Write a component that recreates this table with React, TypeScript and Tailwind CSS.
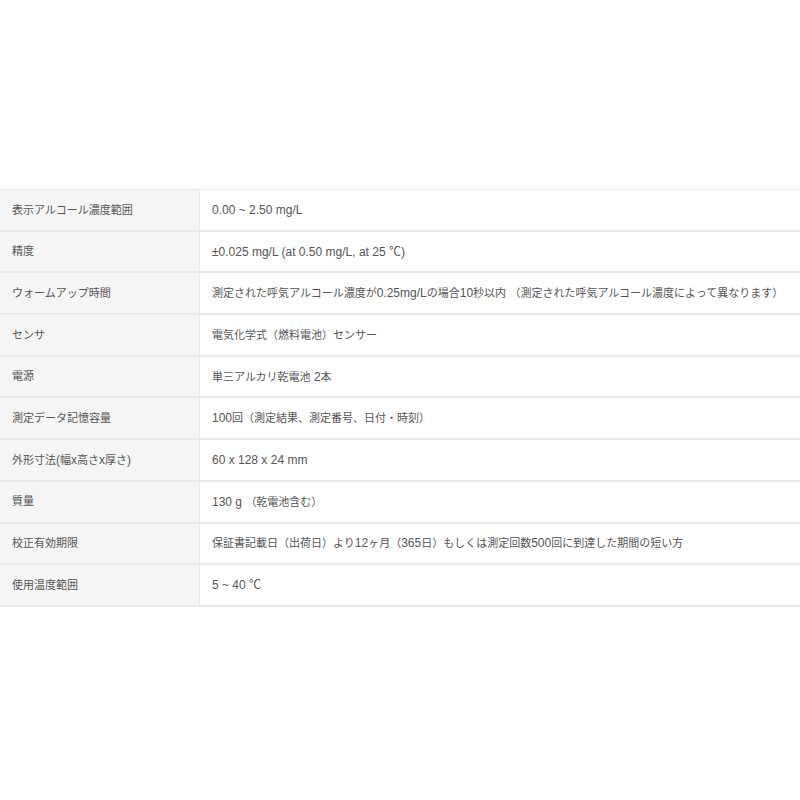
const specs: [string, string][] = [
  ["表示アルコール濃度範囲", "0.00 ~ 2.50 mg/L"],
  ["精度", "±0.025 mg/L (at 0.50 mg/L, at 25 ℃)"],
  [
    "ウォームアップ時間",
    "測定された呼気アルコール濃度が0.25mg/Lの場合10秒以内 （測定された呼気アルコール濃度によって異なります）",
  ],
  ["センサ", "電気化学式（燃料電池）センサー"],
  ["電源", "単三アルカリ乾電池 2本"],
  ["測定データ記憶容量", "100回（測定結果、測定番号、日付・時刻）"],
  ["外形寸法(幅x高さx厚さ)", "60 x 128 x 24 mm"],
  ["質量", "130 g （乾電池含む）"],
  ["校正有効期限", "保証書記載日（出荷日）より12ヶ月（365日）もしくは測定回数500回に到達した期間の短い方"],
  ["使用温度範囲", "5 ~ 40 ℃"],
];

// japanese glyphs sit a bit smaller than the latin text in the original
function Mixed({ text }: { text: string }) {
  const parts = text.split(/([\u3000-\u9fff\uff00-\uffef]+)/);
  return (
    <>
      {parts.map((part, i) =>
        i % 2 === 1 ? (
          <span key={i} className="text-[11px]">
            {part}
          </span>
        ) : (
          <span key={i}>{part}</span>
        )
      )}
    </>
  );
}

export default function App() {
  return (
    <div className="h-[800px] w-[800px] bg-white pt-[189px] font-['Liberation_Sans','Noto_Sans_CJK_JP',sans-serif] text-[12px] text-[#555]">
      <div className="border-t border-[#e6e6e6]">
        {specs.map(([label, value]) => (
          <div key={label} className="flex h-[41.7px] border-b-2 border-[#e9e9e9]">
            <div className="flex w-[200px] shrink-0 items-center whitespace-nowrap border-r border-[#e9e9e9] bg-[#f5f5f5] pl-[12px]">
              <Mixed text={label} />
            </div>
            <div className="flex flex-1 items-center whitespace-nowrap pl-[12px]">
              <span>
                <Mixed text={value} />
              </span>
            </div>
          </div>
        ))}
      </div>
    </div>
  );
}
